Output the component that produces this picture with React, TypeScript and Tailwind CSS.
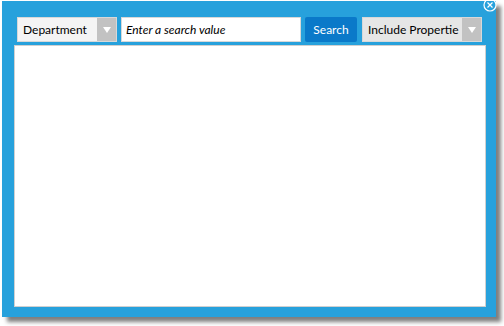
export default function App() {
  return (
    <div className="h-[326px] w-[504px] bg-white pl-[2px] pt-[1px]" style={{ fontFamily: 'Lato, "Noto Sans", sans-serif' }}>
      <div className="relative flex h-[316px] w-[494px] flex-col bg-[#27a1dc] pb-[10px] pl-[12px] pr-[10px] pt-[16px] shadow-[5px_5px_4px_rgba(0,0,0,0.5)]">
        {/* close */}
        <svg className="absolute right-[-1px] top-[-3px]" width="14" height="14" viewBox="0 0 14 14">
          <circle cx="7" cy="7" r="6" fill="none" stroke="white" strokeWidth="1.2" />
          <path d="M4.5 4.5 L9.5 9.5 M9.5 4.5 L4.5 9.5" stroke="white" strokeWidth="1.2" />
        </svg>

        {/* toolbar */}
        <div className="flex h-[25px] items-stretch pl-[3px]">
          <div className="flex w-[100px] border border-[#d8d8d8] bg-[#f4f4f4]">
            <span className="flex-1 pl-[5px] pt-[1px] text-[12px] leading-[22px] text-black">Department</span>
            <span className="flex w-[19px] items-center justify-center bg-[#c2c2c2]">
              <svg width="8" height="6" viewBox="0 0 8 6"><path d="M0 0 H8 L4 6 Z" fill="white" /></svg>
            </span>
          </div>
          <div className="ml-[4px] w-[180px] border border-[#d8d8d8] bg-white pl-[4px] pt-[1px] text-[12px] italic leading-[22px] text-black">
            Enter a search value
          </div>
          <button className="ml-[4px] w-[52px] rounded-[2px] bg-[#0a79c9] pt-[1px] text-[12px] leading-[24px] text-white">
            Search
          </button>
          <div className="ml-[5px] flex w-[120px] border border-[#d8d8d8] bg-[#e6e6e6]">
            <span className="flex-1 overflow-hidden whitespace-nowrap pl-[5px] pt-[1px] text-[12px] leading-[22px] text-black">Include Propertie</span>
            <span className="flex w-[19px] items-center justify-center bg-[#c2c2c2]">
              <svg width="8" height="6" viewBox="0 0 8 6"><path d="M0 0 H8 L4 6 Z" fill="white" /></svg>
            </span>
          </div>
        </div>

        {/* content */}
        <div className="mt-[3px] flex-1 border border-[#d0d0d0] bg-white" />
      </div>
    </div>
  );
}
